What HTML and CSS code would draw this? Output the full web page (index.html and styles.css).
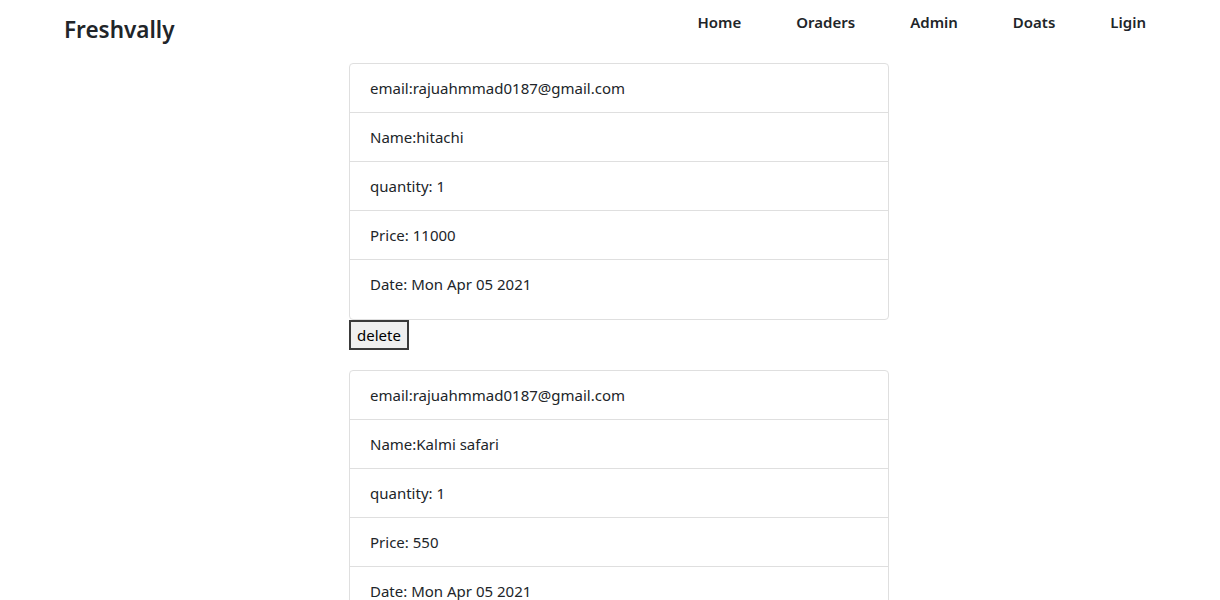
FILE: index.html
```html
<!DOCTYPE html>
<html>
<head>
<meta charset="utf-8">
<link rel="stylesheet" href="styles.css">
</head>
<body>
<nav class="navbar">
  <a class="brand" href="#">Freshvally</a>
  <div class="links">
    <a href="#">Home</a>
    <a href="#">Oraders</a>
    <a href="#">Admin</a>
    <a href="#">Doats</a>
    <a href="#">Ligin</a>
  </div>
</nav>
<main class="orders">
  <div class="order">
    <ul class="card">
      <li>email:rajuahmmad0187@gmail.com</li>
      <li>Name:hitachi</li>
      <li>quantity: 1</li>
      <li>Price: 11000</li>
      <li>Date: Mon Apr 05 2021</li>
    </ul>
    <button class="delete">delete</button>
  </div>
  <div class="order">
    <ul class="card">
      <li>email:rajuahmmad0187@gmail.com</li>
      <li>Name:Kalmi safari</li>
      <li>quantity: 1</li>
      <li>Price: 550</li>
      <li>Date: Mon Apr 05 2021</li>
    </ul>
    <button class="delete">delete</button>
  </div>
</main>
</body>
</html>
```
FILE: styles.css
```css
* { box-sizing: border-box; }
body {
  margin: 0;
  font-family: "Noto Sans", "Open Sans", sans-serif;
  font-size: 15px;
  line-height: 24px;
  color: #212529;
  background: #fff;
}
a { text-decoration: none; color: #212529; }
.navbar {
  display: flex;
  align-items: center;
  justify-content: space-between;
  height: 63px;
  padding: 0 74px 16px 64px;
}
.brand {
  font-size: 22.5px;
  font-weight: 600;
  line-height: 1.2;
  padding-top: 12px;
}
.links { display: flex; gap: 55px; padding-bottom: 3px; }
.links a { font-weight: 600; font-size: 15px; }
.orders {
  width: 540px;
  margin-left: 349px;
  display: flex;
  flex-direction: column;
  gap: 20px;
}
.card {
  list-style: none;
  margin: 0;
  padding: 0 0 11px;
  border: 1px solid #dfdfdf;
  border-radius: 4px;
}
.card li {
  padding: 12px 20px;
  border-bottom: 1px solid #dfdfdf;
}
.card li:last-child { border-bottom: none; }
.delete {
  display: block;
  font: inherit;
  color: #000;
  background: #efefef;
  border: 2px solid #3a3a3a;
  padding: 1px 6px;
  line-height: 24px;
}
```
